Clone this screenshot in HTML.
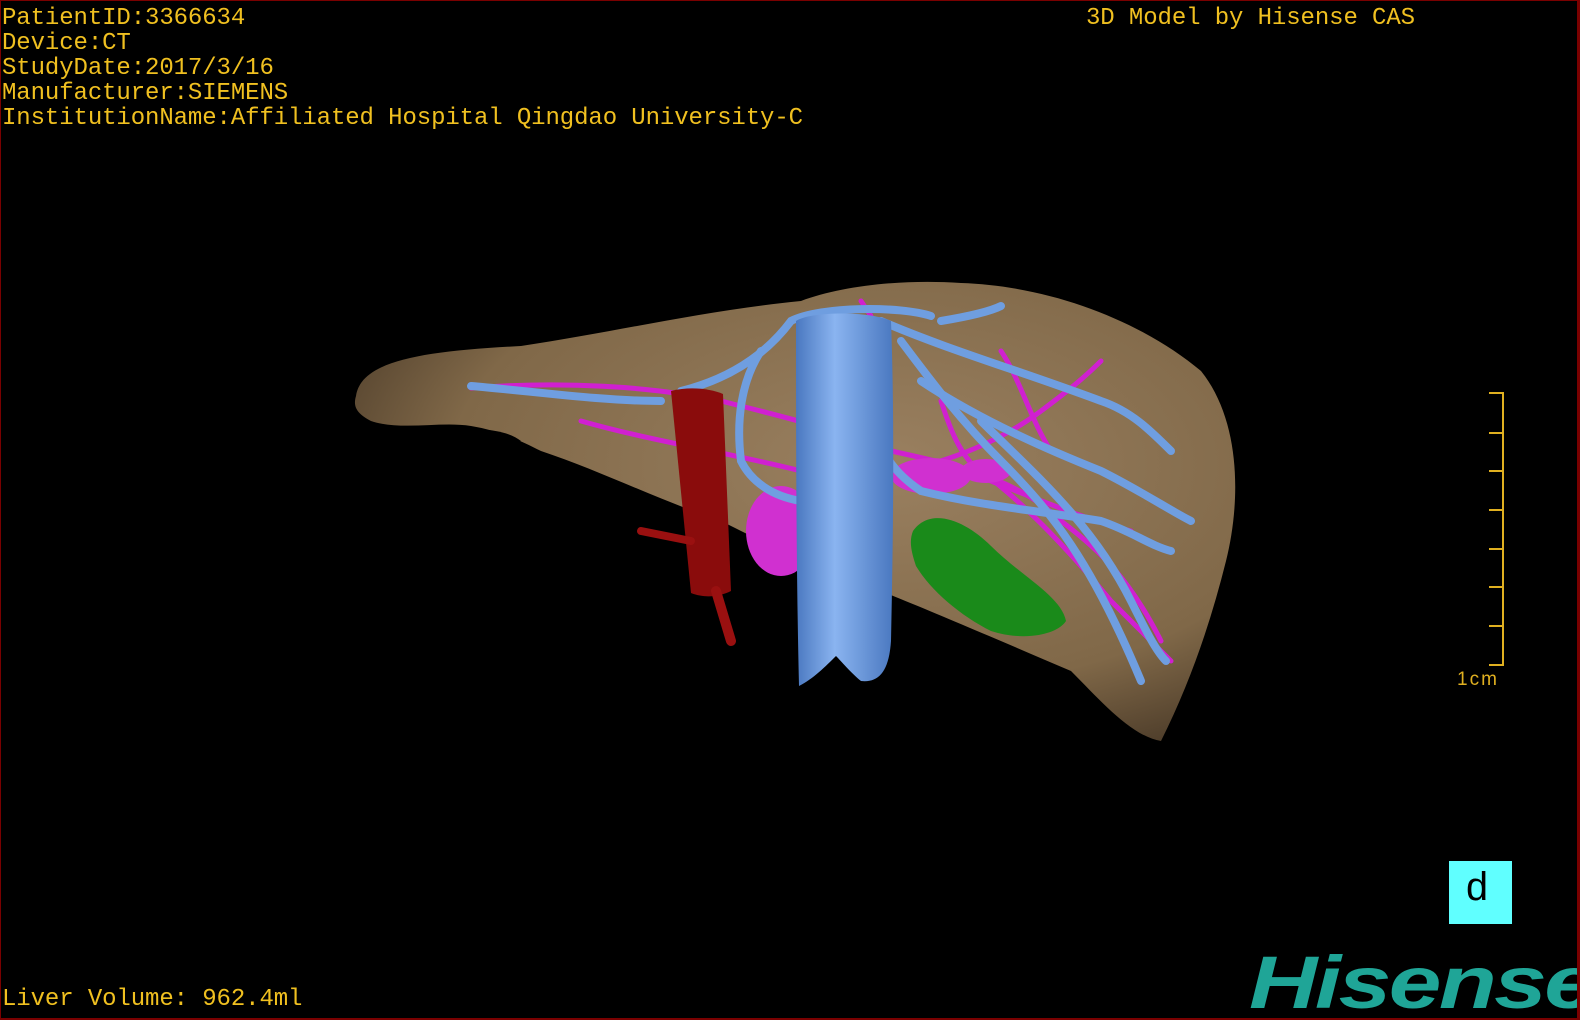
<!DOCTYPE html>
<html><head><style>
html,body{margin:0;padding:0;background:#000;}
#c{position:relative;width:1580px;height:1020px;background:#000;overflow:hidden;box-sizing:border-box;border:1px solid #7a0000;border-right-width:3px;border-bottom-width:2px;}
.t{position:absolute;font-family:"Liberation Mono",monospace;font-size:24px;color:#f0c020;line-height:25px;white-space:pre;letter-spacing:-0.1px;}
</style></head><body><div id="c">
<svg width="1580" height="1020" style="position:absolute;left:0;top:0">
<defs>
<radialGradient id="lg" cx="0.6" cy="0.4" r="0.7">
<stop offset="0" stop-color="#9a8060"/><stop offset="0.7" stop-color="#806848"/><stop offset="1" stop-color="#4a3a28"/>
</radialGradient>
<linearGradient id="bl" x1="0" x2="1"><stop offset="0" stop-color="#4a78c0"/><stop offset="0.4" stop-color="#8ab4f0"/><stop offset="1" stop-color="#4a78c0"/></linearGradient>
</defs>
<path d="M355 395 C360 360 420 350 520 345 C620 330 700 310 800 300 C840 285 900 278 960 282 C1050 285 1140 320 1200 370 C1240 420 1240 500 1225 560 C1210 620 1190 680 1160 740 C1130 735 1100 700 1070 670 C1000 640 930 610 880 590 C820 570 760 540 720 520 C660 500 600 470 540 450 C520 440 500 430 470 425 C440 420 400 430 370 420 C355 412 352 405 355 395 Z" fill="url(#lg)"/>
<path d="M440 440 C460 425 500 425 520 440 C500 445 470 445 440 440Z" fill="#000"/>
<g fill="none" stroke="#d020d0" stroke-width="5" stroke-linecap="round">
<path d="M470 387 C560 380 650 385 720 400 C780 415 840 430 890 450 C960 465 1020 480 1060 520 C1100 550 1130 580 1160 640"/>
<path d="M580 420 C650 440 720 450 800 470"/>
<path d="M900 470 C950 460 1000 440 1040 410 C1060 395 1080 380 1100 360"/>
<path d="M980 470 C1020 500 1060 540 1110 600 C1130 620 1150 640 1170 660"/>
<path d="M940 400 C950 430 960 460 990 480 C1040 500 1090 520 1130 530"/>
<path d="M1000 350 C1020 380 1030 420 1050 450"/>
<path d="M860 300 L870 315"/>
</g>
<g fill="#d030d0"><ellipse cx="780" cy="530" rx="35" ry="45"/><ellipse cx="930" cy="475" rx="40" ry="18"/><ellipse cx="985" cy="470" rx="25" ry="12"/></g>
<g fill="none" stroke="#6f9ee0" stroke-width="8" stroke-linecap="round">
<path d="M680 390 C720 380 760 360 790 320 C820 305 900 305 930 315"/>
<path d="M900 340 C930 380 960 420 1000 460 C1050 510 1090 560 1140 680"/>
<path d="M880 320 C950 350 1020 370 1100 400 C1130 410 1150 430 1170 450"/>
<path d="M920 380 C980 420 1050 450 1100 470 C1140 490 1170 510 1190 520"/>
<path d="M870 420 C880 450 890 470 920 490 C980 505 1040 510 1100 520 C1130 530 1150 545 1170 550"/>
<path d="M760 350 C740 380 735 420 740 460 C750 480 770 495 800 500"/>
<path d="M940 320 C970 315 990 310 1000 305"/>
<path d="M470 385 C530 390 600 400 660 400"/>
<path d="M980 420 C1030 470 1090 520 1130 600 C1145 630 1155 650 1165 660"/>
</g>
<path d="M795 320 C810 310 870 310 890 320 C893 400 893 500 890 640 C888 670 878 682 860 680 C850 672 840 660 835 655 C825 665 812 678 798 685 C795 560 795 420 795 320 Z" fill="url(#bl)"/>
<path d="M912 530 C930 505 965 520 990 545 C1020 575 1060 595 1065 620 C1055 635 1020 640 990 630 C960 615 930 590 915 565 C910 550 908 540 912 530Z" fill="#1a8a1a"/>
<path d="M670 390 C690 385 710 388 722 393 L730 590 C720 595 705 598 690 592 Z" fill="#8a0c0c"/>
<path d="M715 590 L730 640" stroke="#9a1010" stroke-width="10" stroke-linecap="round"/>
<path d="M640 530 L690 540" stroke="#9a1010" stroke-width="8" stroke-linecap="round"/>
<g stroke="#e0b020" stroke-width="2" fill="none">
<path d="M1488 392 H1502 V664 H1488"/>
<path d="M1488 432H1502M1488 470H1502M1488 509H1502M1488 548H1502M1488 586H1502M1488 625H1502"/>
</g>
</svg>
<div class="t" style="left:1px;top:5px">PatientID:3366634
Device:CT
StudyDate:2017/3/16
Manufacturer:SIEMENS
InstitutionName:Affiliated Hospital Qingdao University-C</div>
<div class="t" style="left:1085px;top:5px">3D Model by Hisense CAS</div>
<div class="t" style="left:1px;top:986px">Liver Volume: 962.4ml</div>
<div style="position:absolute;left:1456px;top:668px;font-family:'Liberation Sans',sans-serif;font-size:19px;color:#e0b020;letter-spacing:2px">1cm</div>
<div style="position:absolute;left:1448px;top:860px;width:63px;height:63px;background:#60ffff;"><span style="position:absolute;left:16px;top:8px;font-family:'Liberation Mono',monospace;font-size:40px;color:#000;line-height:44px">d</span></div>
<div style="position:absolute;left:1248px;top:942px;font-family:'Liberation Sans',sans-serif;font-weight:bold;font-style:italic;font-size:74px;color:#1fa597;letter-spacing:-2px;line-height:80px;transform:scaleX(1.28);transform-origin:0 0">Hisense</div>
</div></body></html>
